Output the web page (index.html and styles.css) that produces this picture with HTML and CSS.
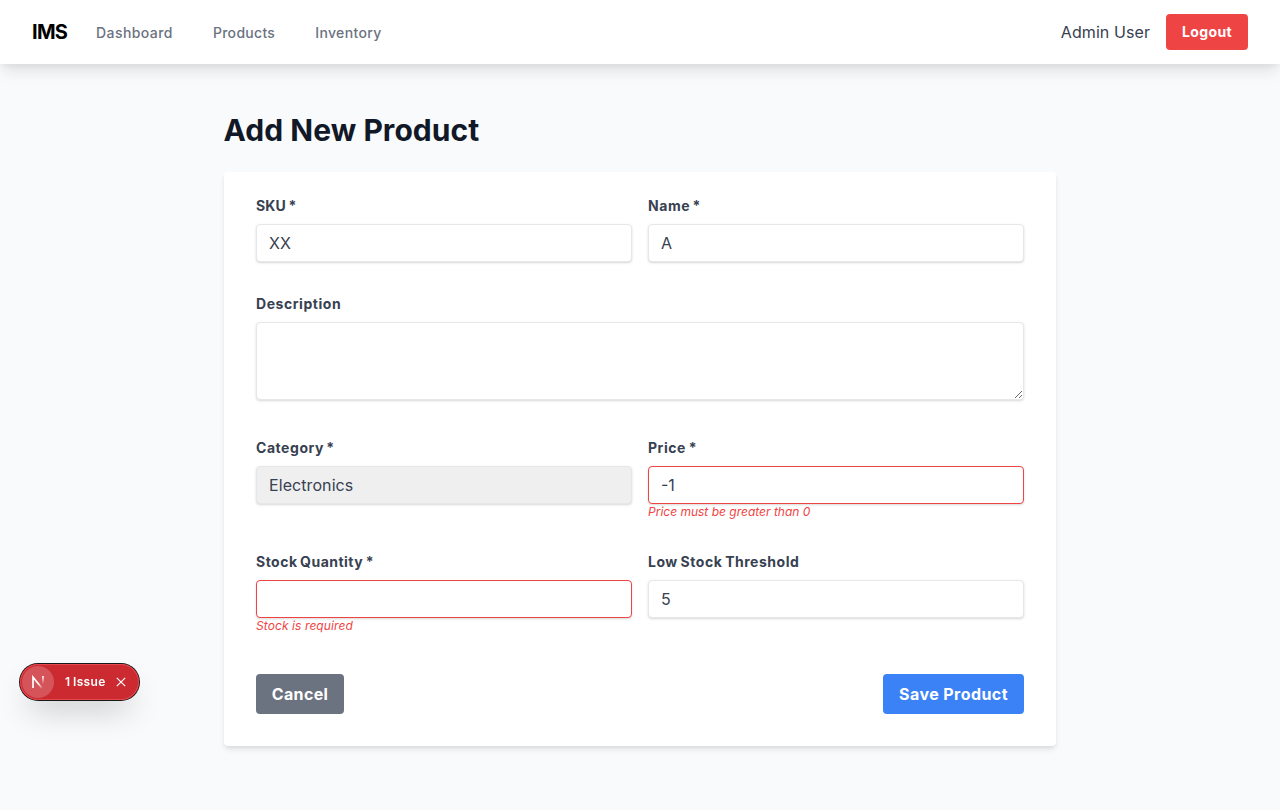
FILE: index.html
```html
<!DOCTYPE html>
<html lang="en">
<head>
<meta charset="utf-8">
<title>IMS</title>
<link rel="stylesheet" href="styles.css">
</head>
<body>
<nav class="nav">
  <div class="nav-left">
    <a class="brand">IMS</a>
    <a class="link link-first">Dashboard</a>
    <a class="link link-products">Products</a>
    <a class="link">Inventory</a>
  </div>
  <div class="nav-right">
    <span class="user">Admin User</span>
    <button class="btn logout">Logout</button>
  </div>
</nav>
<main class="main">
  <h1 class="title">Add New Product</h1>
  <form class="card">
    <div class="row">
      <div class="field"><label class="label label-caps">SKU *</label><input class="input" type="text" value="XX"></div>
      <div class="field"><label class="label">Name *</label><input class="input" type="text" value="A"></div>
    </div>
    <div class="row">
      <div class="field"><label class="label">Description</label><textarea class="input area"></textarea></div>
    </div>
    <div class="row">
      <div class="field"><label class="label">Category *</label><div class="input select">Electronics</div></div>
      <div class="field"><label class="label label-wide">Price *</label><input class="input invalid" type="text" value="-1"><p class="error">Price must be greater than 0</p></div>
    </div>
    <div class="row">
      <div class="field"><label class="label label-stock">Stock Quantity *</label><input class="input invalid" type="text"><p class="error error-stock">Stock is required</p></div>
      <div class="field"><label class="label label-wide">Low Stock Threshold</label><input class="input" type="text" value="5"></div>
    </div>
    <div class="actions">
      <button class="btn cancel" type="button">Cancel</button>
      <button class="btn save" type="button">Save Product</button>
    </div>
  </form>
</main>
<div class="issue">
  <span class="mark"><svg width="14" height="14" viewBox="0 0 14 14" fill="none"><defs><linearGradient id="a" x1="8" y1="8" x2="12" y2="13" gradientUnits="userSpaceOnUse"><stop stop-color="#fff"/><stop offset="1" stop-color="#fff" stop-opacity="0"/></linearGradient><linearGradient id="b" x1="11.8" y1="1" x2="11.8" y2="9" gradientUnits="userSpaceOnUse"><stop stop-color="#fff"/><stop offset="1" stop-color="#fff" stop-opacity="0"/></linearGradient></defs><path d="M2 13V2.2L11.3 13.5" stroke="url(#a)" stroke-width="1.7"/><path d="M12 1V9.5" stroke="url(#b)" stroke-width="1.7"/></svg></span>
  <span class="count">1 Issue</span>
  <svg class="close" width="10" height="10" viewBox="0 0 10 10" fill="none" stroke="#fff" stroke-width="1.2"><path d="M.8.8l8.4 8.4M9.2.8L.8 9.2"/></svg>
</div>
</body>
</html>
```
FILE: styles.css
```css
* { box-sizing: border-box; }
body { margin: 0; min-height: 810px; background: #f9fafb; font-family: Inter, sans-serif; font-size: 16px; line-height: 24px; color: #374151; }
.nav { height: 64px; padding: 0 32px; display: flex; align-items: center; justify-content: space-between; background: #fff; box-shadow: 0 10px 15px -3px rgba(0,0,0,.1), 0 4px 6px -2px rgba(0,0,0,.05); }
.nav-left, .nav-right { display: flex; align-items: center; }
.brand { width: 36px; font-size: 20px; line-height: 28px; font-weight: 700; letter-spacing: -.7px; color: #000; margin-right: 28px; }
.link { font-size: 14px; line-height: 20px; font-weight: 500; color: #6b7280; margin-right: 40px; letter-spacing: .35px; padding-top: 2px; }
.link-first { letter-spacing: .43px; }
.link-products { letter-spacing: .3px; }
.nav-right { gap: 16px; }
.user { letter-spacing: .08px; }
.btn { border: 0; border-radius: 4px; padding: 8px 0; font: 700 16px/24px Inter, sans-serif; color: #fff; text-align: center; letter-spacing: .35px; }
.logout { width: 82px; background: #ef4444; font-size: 14px; line-height: 20px; }
.main { width: 832px; margin: 0 auto; padding-top: 48px; }
.title { margin: 0 0 24px -.5px; font-size: 30px; line-height: 36px; font-weight: 700; color: #111827; letter-spacing: .04px; }
.card { height: 574px; padding: 24px 32px 32px; background: #fff; border-radius: 4px; box-shadow: 0 4px 6px -1px rgba(0,0,0,.1), 0 2px 4px -1px rgba(0,0,0,.06); }
.row { display: flex; gap: 16px; margin-bottom: 32px; }
.field { flex: 1; }
.label { display: block; font-size: 14px; line-height: 20px; font-weight: 700; margin-bottom: 8px; letter-spacing: .55px; word-spacing: -1.7px; }
.label:not(.label-wide):not(.label-caps):not(.label-stock) { word-spacing: -1.5px; }
.label-caps { letter-spacing: .1px; word-spacing: -.7px; }
.label-stock { letter-spacing: .48px; word-spacing: -1.2px; }
.label-wide { letter-spacing: .52px; word-spacing: -1px; }
.input { display: block; width: 100%; height: 38px; padding: 8px 12px; border: 1px solid #e5e7eb; border-radius: 4px; background: #fff; font: 16px/20px Inter, sans-serif; color: #374151; box-shadow: 0 1px 3px rgba(0,0,0,.1), 0 1px 2px rgba(0,0,0,.06); outline: 0; }
.area { height: 78px; resize: vertical; margin-bottom: 6px; }
.select { background: #efefef; letter-spacing: .08px; }
.invalid { border-color: #ef4444; }
.error { margin: 0; font-size: 12px; line-height: 16px; font-style: italic; color: #ef4444; }
.error-stock { letter-spacing: .09px; }
.actions { display: flex; justify-content: space-between; margin-top: 40px; }
.cancel { width: 88px; background: #6b7280; }
.save { width: 141px; background: #3b82f6; letter-spacing: .43px; }
.issue { position: fixed; left: 20px; top: 664px; width: 119px; height: 36px; border-radius: 18px; background: #ca2a30; display: flex; align-items: center; padding: 2px; box-shadow: 0 0 0 1px #171717, inset 0 0 0 1px #e5484d, 0 16px 32px -8px rgba(0,0,0,.24); color: #fff; }
.mark { width: 32px; height: 32px; border-radius: 50%; background: rgba(255,255,255,.2); display: flex; align-items: center; justify-content: center; }
.count { margin-left: 11px; width: 42px; font-size: 12px; line-height: 16px; font-weight: 600; letter-spacing: .35px; word-spacing: -.8px; white-space: nowrap; }
.close { margin-left: 9px; }
```
